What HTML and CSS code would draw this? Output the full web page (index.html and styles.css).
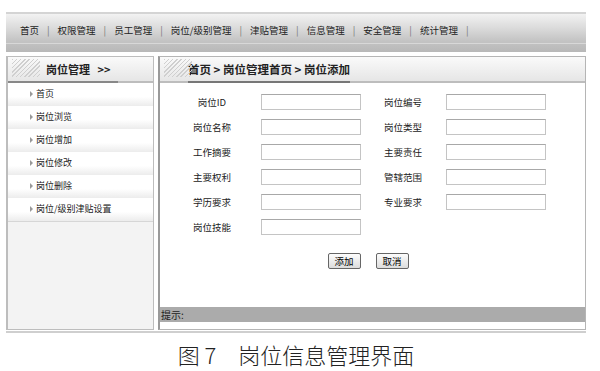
FILE: index.html
```html
<!DOCTYPE html>
<html lang="zh-CN">
<head>
    <meta charset="UTF-8">
    <title>岗位信息管理界面</title>
    <link rel="stylesheet" href="styles.css">
</head>
<body>
    <div class="frame">
        <div class="topbar">
            <ul class="nav">
                <li>首页</li>
                <li>权限管理</li>
                <li>员工管理</li>
                <li>岗位/级别管理</li>
                <li>津贴管理</li>
                <li>信息管理</li>
                <li>安全管理</li>
                <li>统计管理</li>
            </ul>
        </div>
        <div class="main">
            <div class="side">
                <div class="head"><span class="hatch"></span><span class="side-title">岗位管理 &nbsp;&nbsp;&gt;&gt;</span></div>
                <ul class="menu">
                    <li>首页</li>
                    <li>岗位浏览</li>
                    <li>岗位增加</li>
                    <li>岗位修改</li>
                    <li>岗位删除</li>
                    <li>岗位/级别津贴设置</li>
                </ul>
            </div>
            <div class="content">
                <div class="head"><span class="hatch"></span><span class="crumb">首页 &gt; 岗位管理首页 &gt; 岗位添加</span></div>
                <div class="form">
                    <div class="grid">
                        <label>岗位ID</label><input type="text"><label>岗位编号</label><input type="text">
                        <label>岗位名称</label><input type="text"><label>岗位类型</label><input type="text">
                        <label>工作摘要</label><input type="text"><label>主要责任</label><input type="text">
                        <label>主要权利</label><input type="text"><label>管辖范围</label><input type="text">
                        <label>学历要求</label><input type="text"><label>专业要求</label><input type="text">
                        <label>岗位技能</label><input type="text">
                    </div>
                    <div class="actions">
                        <button type="button">添加</button>
                        <button type="button">取消</button>
                    </div>
                </div>
                <div class="tip">提示:</div>
            </div>
        </div>
    </div>
    <div class="caption">图 7<span class="gap"></span>岗位信息管理界面</div>
</body>
</html>
```

FILE: styles.css
```css
body {
    margin: 0;
    background: #fff;
    font-family: "Noto Sans CJK SC", "Noto Sans", sans-serif;
    color: #222;
}
.frame {
    margin: 12px 14px 0 6px;
    border-bottom: 2px solid #cfcfcf;
    padding-bottom: 1px;
}
.topbar {
    height: 38px;
    border-top: 2px solid #d4d4d4;
    background: linear-gradient(#f2f2f2 0%, #dcdcdc 35%, #c4c4c4 70%, #b8b8b8 100%);
    position: relative;
}
.topbar::after {
    content: "";
    position: absolute;
    left: 0;
    right: 0;
    top: 29px;
    border-top: 1px solid #d8d8d8;
}
.nav {
    list-style: none;
    margin: 0;
    padding: 0 0 0 14px;
    display: flex;
    height: 32px;
    align-items: center;
    font-size: 9.5px;
}
.nav li::after {
    content: "|";
    color: #777;
    margin: 0 8px;
}
.main {
    display: flex;
    gap: 4px;
    margin-top: 4px;
    height: 274px;
}
.side {
    width: 145px;
    border: 1px solid #bdbdbd;
    border-left-width: 2px;
    background: #f3f3f3;
}
.content {
    flex: 1;
    border: 1px solid #b5b5b5;
    border-left: 2px solid #9a9a9a;
    display: flex;
    flex-direction: column;
    background: #fff;
}
.head {
    height: 24px;
    display: flex;
    align-items: center;
    background: linear-gradient(#fafafa, #e6e6e6);
    border-bottom: 2px solid #bdbdbd;
    position: relative;
}
.hatch {
    position: absolute;
    left: 4px;
    top: 2px;
    width: 28px;
    height: 18px;
    background: repeating-linear-gradient(135deg, #cfcfcf 0 1px, transparent 1px 3px);
}
.side-title {
    font-size: 11px;
    font-weight: bold;
    margin-left: 38px;
}
.side .head::after {
    content: "";
    position: absolute;
    left: 0;
    width: 110px;
    bottom: -2px;
    border-bottom: 2px solid #888;
}
.crumb {
    font-size: 11.5px;
    font-weight: bold;
    margin-left: 28px;
    align-self: stretch;
    line-height: 24px;
    border-bottom: 2px solid #777;
    margin-bottom: -2px;
}
.menu {
    list-style: none;
    margin: 0;
    padding: 0;
    background: #fff;
    border-bottom: 1px solid #d6d6d6;
    font-size: 9px;
}
.menu li {
    height: 23px;
    line-height: 22px;
    padding-left: 22px;
    background: linear-gradient(#fff 60%, #ececec);
}
.menu li::before {
    content: "";
    display: inline-block;
    border-left: 3px solid #999;
    border-top: 3px solid transparent;
    border-bottom: 3px solid transparent;
    margin-right: 3px;
    vertical-align: 0;
}
.form {
    flex: 1;
    padding: 11px 0 0 22px;
}
.grid {
    display: grid;
    grid-template-columns: 79px 100px 85px 100px;
    row-gap: 9px;
    align-items: center;
    font-size: 9.5px;
}
.grid label:nth-of-type(odd) {
    width: 60px;
    text-align: center;
}
.grid label:nth-of-type(even) {
    padding-left: 23px;
}
.grid input {
    width: 100px;
    height: 16px;
    box-sizing: border-box;
    border: 1px solid #c4c4c4;
    border-top-color: #a8a8a8;
    margin: 0;
}
.actions {
    display: flex;
    justify-content: center;
    gap: 15px;
    margin-top: 18px;
    padding-right: 31px;
}
.actions button {
    width: 33px;
    height: 16px;
    padding: 0;
    font-family: inherit;
    font-size: 9.5px;
    border: 1px solid #666;
    border-radius: 2px;
    background: linear-gradient(#fdfdfd, #dcdcdc);
}
.tip {
    height: 15px;
    line-height: 15px;
    background: #ababab;
    font-size: 10px;
    margin-bottom: 7px;
    padding-left: 1px;
}
.caption {
    text-align: center;
    font-size: 22px;
    font-weight: 300;
    margin-top: 5px;
    color: #222;
    padding-right: 8px;
}
.gap {
    display: inline-block;
    width: 22px;
}
```
